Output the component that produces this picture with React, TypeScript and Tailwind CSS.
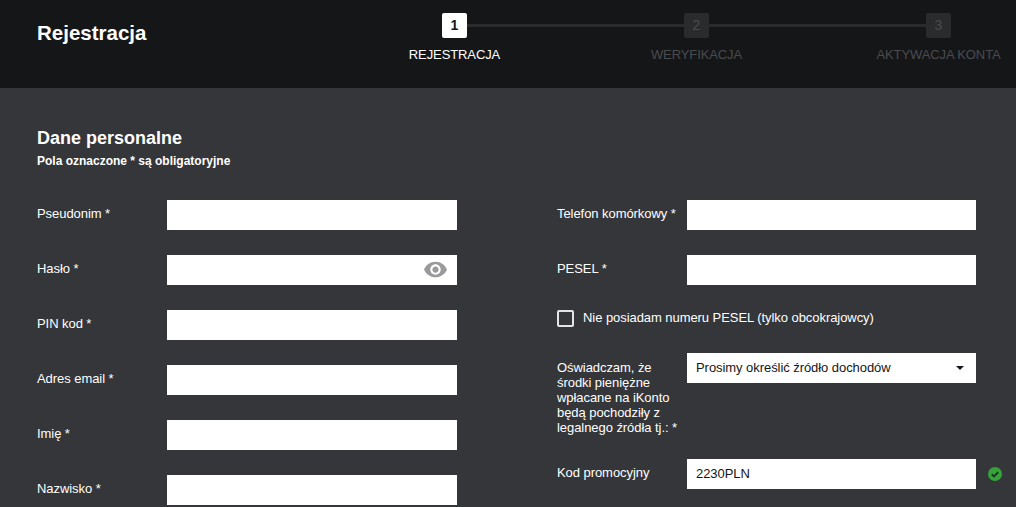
const leftFields = ['Pseudonim *', 'Hasło *', 'PIN kod *', 'Adres email *', 'Imię *', 'Nazwisko *'];

function Step({ num, label, active }: { num: number; label: string; active?: boolean }) {
  return (
    <div className="flex w-[25px] flex-col items-center">
      <div
        className={`flex h-[25px] w-[25px] items-center justify-center rounded-[2px] text-[14px] ${
          active ? 'bg-white font-bold text-[#151618]' : 'bg-[#2a2b2d] text-[#4a4b4f]'
        }`}
      >
        {num}
      </div>
      <span className={`mt-[9px] whitespace-nowrap text-[13px] leading-[16px] tracking-[-0.1px] ${active ? 'text-white' : 'text-[#4a4b4f]'}`}>
        {label}
      </span>
    </div>
  );
}

function Field({ label, children }: { label: string; children?: React.ReactNode }) {
  return (
    <div className="flex h-[30px] items-start tracking-[-0.06px]">
      <label className="w-[130px] shrink-0 pt-[6px] text-[13px] leading-[16px] text-white">{label}</label>
      <div className="flex h-[30px] flex-1 items-center bg-white px-[9px] text-[13px] text-[#151618]">{children}</div>
    </div>
  );
}

export default function App() {
  return (
    <div className="h-[507px] w-[1016px] overflow-hidden bg-[#35363a] font-['Liberation_Sans',Arial,sans-serif]">
      {/* Header */}
      <header className="flex h-[88px] bg-[#151618] pl-[37px] pt-[13px]">
        <h1 className="w-[405px] pt-[7px] text-[20.5px] leading-[25px] font-bold text-white">Rejestracja</h1>
        <div className="flex items-start">
          <Step num={1} label="REJESTRACJA" active />
          <div className="mt-[11px] h-[3px] w-[217px] bg-[#2a2b2d]" />
          <Step num={2} label="WERYFIKACJA" />
          <div className="mt-[11px] h-[3px] w-[217px] bg-[#2a2b2d]" />
          <Step num={3} label="AKTYWACJA KONTA" />
        </div>
      </header>

      {/* Form */}
      <main className="pl-[37px] pt-[39px]">
        <h2 className="text-[18px] leading-[22px] font-bold text-white">Dane personalne</h2>
        <p className="mt-[4px] text-[12px] leading-[16px] font-bold text-white">Pola oznaczone * są obligatoryjne</p>

        <div className="mt-[31px] flex">
          <div className="flex w-[420px] shrink-0 flex-col gap-[25px]">
            {leftFields.map((label) => (
              <Field key={label} label={label}>
                {label === 'Hasło *' && (
                  <svg className="ml-auto -mt-[2px] h-[25px] w-[25px]" viewBox="0 0 24 24" fill="#9a9a9a">
                    <path d="M12 4.5C7 4.5 2.73 7.61 1 12c1.73 4.39 6 7.5 11 7.5s9.27-3.11 11-7.5c-1.73-4.39-6-7.5-11-7.5zM12 17c-2.76 0-5-2.24-5-5s2.24-5 5-5 5 2.24 5 5-2.24 5-5 5zm0-8c-1.66 0-3 1.34-3 3s1.34 3 3 3 3-1.34 3-3-1.34-3-3-3z" />
                  </svg>
                )}
              </Field>
            ))}
          </div>

          <div className="ml-[100px] flex w-[419px] shrink-0 flex-col tracking-[-0.06px]">
            <Field label="Telefon komórkowy *" />
            <div className="mt-[25px]">
              <Field label="PESEL *" />
            </div>
            <div className="mt-[25px] flex h-[17px] items-start">
              <span className="h-[17px] w-[17px] rounded-[2px] border-2 border-[#e4e4e4]" />
              <span className="ml-[9px] text-[13px] leading-[16px] text-white">Nie posiadam numeru PESEL (tylko obcokrajowcy)</span>
            </div>
            <div className="mt-[26px] flex items-start">
              <label className="w-[130px] shrink-0 pt-[7px] text-[13px] leading-[15px] text-white">
                Oświadczam, że środki pieniężne wpłacane na iKonto będą pochodziły z legalnego źródła tj.: *
              </label>
              <div className="flex h-[30px] flex-1 items-center justify-between bg-white pl-[9px] pr-[12px] text-[13px] text-[#151618]">
                Prosimy określić źródło dochodów
                <span className="h-0 w-0 border-x-[4px] border-t-[4px] border-x-transparent border-t-[#151618]" />
              </div>
            </div>
            <div className="mt-[24px]">
              <Field label="Kod promocyjny">2230PLN</Field>
            </div>
          </div>

          <svg className="mt-[267px] ml-[12px] h-[14px] w-[14px] shrink-0 self-start" viewBox="0 0 14 14">
            <circle cx="7" cy="7" r="7" fill="#35a33a" />
            <path d="M3.8 7.2 6 9.4l4.2-4.2" fill="none" stroke="#1c3a22" strokeWidth="2" />
          </svg>
        </div>
      </main>
    </div>
  );
}
